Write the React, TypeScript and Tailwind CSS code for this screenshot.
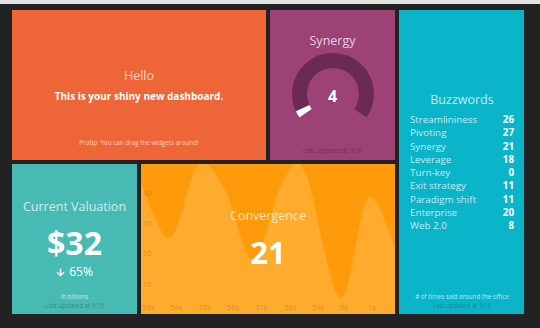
import React from "react";
import { FaArrowDown } from "react-icons/fa";

const font = { fontFamily: '"Open Sans", "Noto Sans", sans-serif' };

function smoothPath(pts: [number, number][]) {
  let d = `M${pts[0][0]},${pts[0][1]}`;
  for (let i = 0; i < pts.length - 1; i++) {
    const p0 = pts[i - 1] || pts[i];
    const p1 = pts[i];
    const p2 = pts[i + 1];
    const p3 = pts[i + 2] || p2;
    const c1x = p1[0] + (p2[0] - p0[0]) / 6;
    const c1y = p1[1] + (p2[1] - p0[1]) / 6;
    const c2x = p2[0] - (p3[0] - p1[0]) / 6;
    const c2y = p2[1] - (p3[1] - p1[1]) / 6;
    d += ` C${c1x},${c1y} ${c2x},${c2y} ${p2[0]},${p2[1]}`;
  }
  return d;
}

function arc(cx: number, cy: number, r: number, a0: number, a1: number) {
  const rad = (a: number) => (a * Math.PI) / 180;
  const x0 = cx + r * Math.sin(rad(a0));
  const y0 = cy - r * Math.cos(rad(a0));
  const x1 = cx + r * Math.sin(rad(a1));
  const y1 = cy - r * Math.cos(rad(a1));
  const large = a1 - a0 > 180 ? 1 : 0;
  return `M${x0},${y0} A${r},${r} 0 ${large} 1 ${x1},${y1}`;
}

function Meter() {
  return (
    <svg width="88" height="88" viewBox="0 0 88 88">
      <path d={arc(44, 44, 33.5, -125, 125)} fill="none" stroke="#6b2a52" strokeWidth="15" />
      <path d={arc(44, 44, 33.5, -125, -115)} fill="none" stroke="#ffffff" strokeWidth="15" />
    </svg>
  );
}

function Graph() {
  const pts: [number, number][] = [
    [0, 20],
    [29, 74],
    [57, 1],
    [84, 26],
    [112, 96],
    [141, 19],
    [164, 8],
    [199, 134],
    [227, 34],
    [254, 83],
  ];
  const line = smoothPath(pts);
  const area = `${line} L254,150 L0,150 Z`;
  const xs = [
    ["53s", 7],
    ["54s", 35],
    ["55s", 64],
    ["56s", 92],
    ["57s", 120],
    ["58s", 149],
    ["59s", 177],
    ["0s", 203],
    ["1s", 231],
  ] as const;
  const ys = [
    ["40", 29],
    ["30", 59],
    ["20", 89],
    ["10", 120],
  ] as const;
  return (
    <svg className="absolute inset-0" width="254" height="150" viewBox="0 0 254 150">
      <path d={area} fill="#ffab2e" />
      {ys.map(([t, y]) => (
        <text key={t} x="2" y={y + 3} fontSize="7.5" fill="rgba(140,80,20,0.35)" style={font}>
          {t}
        </text>
      ))}
      {xs.map(([t, x]) => (
        <text key={t} x={x} y={146} fontSize="7.5" textAnchor="middle" fill="rgba(140,80,20,0.35)" style={font}>
          {t}
        </text>
      ))}
    </svg>
  );
}

const words: [string, number][] = [
  ["Streamlininess", 26],
  ["Pivoting", 27],
  ["Synergy", 21],
  ["Leverage", 18],
  ["Turn-key", 0],
  ["Exit strategy", 11],
  ["Paradigm shift", 11],
  ["Enterprise", 20],
  ["Web 2.0", 8],
];

export default function App() {
  return (
    <div className="w-[540px] h-[328px] bg-[#222222] overflow-hidden" style={font}>
      <div className="h-[4px] bg-[#e4e4e4]" />
      <div className="grid grid-cols-[125px_125px_125px_125px] grid-rows-[150px_150px] gap-x-[4px] gap-y-[4px] pl-[12px] pt-[6px]">
        {/* Hello */}
        <div className="col-span-2 bg-[#ee6638] flex flex-col items-center text-center pt-[57px] pb-[13px]">
          <div className="text-[12.5px] leading-[18px] text-white/75">Hello</div>
          <div className="mt-[4px] text-[10px] leading-[14px] font-bold text-white whitespace-nowrap">
            This is your shiny new dashboard.
          </div>
          <div className="mt-auto text-[6.3px] leading-[9px] text-white/70 whitespace-nowrap">
            Protip: You can drag the widgets around!
          </div>
        </div>
        {/* Synergy */}
        <div className="bg-[#9c4274] flex flex-col items-center pt-[22px] pb-[5px]">
          <div className="text-[12.5px] leading-[18px] text-white/75">Synergy</div>
          <div className="relative w-[88px] h-[88px]">
            <Meter />
            <div className="absolute inset-0 flex items-center justify-center pt-[4px] text-[16px] font-bold text-white">
              4
            </div>
          </div>
          <div className="mt-auto text-[6.2px] leading-[9px] text-black/30 whitespace-nowrap">Last updated at 9:16</div>
        </div>
        {/* Buzzwords */}
        <div className="row-span-2 bg-[#0bb5c9] flex flex-col pt-[81px] pb-[4px] pl-[11px] pr-[10px]">
          <div className="text-center text-[12.5px] leading-[18px] text-white/75">Buzzwords</div>
          <div className="mt-[4px] flex flex-col">
            {words.map(([w, n]) => (
              <div key={w} className="flex justify-between text-[9.8px] leading-[13.25px]">
                <span className="text-white/75">{w}</span>
                <span className="font-bold text-white">{n}</span>
              </div>
            ))}
          </div>
          <div className="mt-auto text-center text-[6.2px] leading-[9px] text-white/70 whitespace-nowrap">
            # of times said around the office
          </div>
          <div className="text-center text-[6.2px] leading-[9px] text-black/30 whitespace-nowrap">Last updated at 9:16</div>
        </div>
        {/* Current Valuation */}
        <div className="bg-[#47bbb3] flex flex-col items-center pt-[34px] pb-[4px]">
          <div className="text-[12.5px] leading-[18px] text-white/75 whitespace-nowrap">Current Valuation</div>
          <div className="mt-[9px] text-[32px] leading-[36px] font-bold text-white">$32</div>
          <div className="mt-[3px] flex items-center gap-[4px] text-[12px] leading-[16px] text-white">
            <FaArrowDown className="w-[9px] h-[9px]" />
            <span>65%</span>
          </div>
          <div className="mt-auto text-[6.2px] leading-[9px] text-white/70 whitespace-nowrap">In billions</div>
          <div className="text-[6.2px] leading-[9px] text-black/30 whitespace-nowrap">Last updated at 9:16</div>
        </div>
        {/* Convergence */}
        <div className="col-span-2 relative bg-[#ff9a0a] overflow-hidden">
          <Graph />
          <div className="relative flex flex-col items-center pt-[43px]">
            <div className="text-[12.5px] leading-[18px] text-white/75">Convergence</div>
            <div className="mt-[9px] text-[31px] leading-[36px] font-bold text-white">21</div>
          </div>
        </div>
      </div>
    </div>
  );
}
